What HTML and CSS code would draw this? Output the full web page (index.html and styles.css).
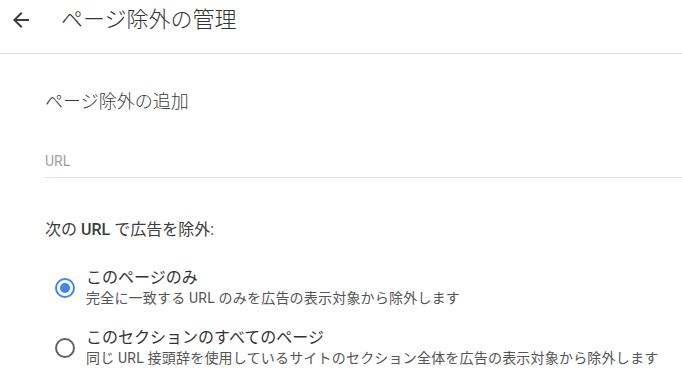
FILE: index.html
```html
<!DOCTYPE html>
<html lang="ja">
<head>
    <meta charset="UTF-8">
    <meta name="viewport" content="width=device-width, initial-scale=1.0">
    <title>ページ除外の管理</title>
    <link rel="stylesheet" href="styles.css">
</head>
<body>
    <!-- Header -->
    <div class="top-bar">
        <button class="back-button" aria-label="戻る">
            <svg width="16" height="16" viewBox="0 0 16 16">
                <path d="M16 7H3.83l5.59-5.59L8 0 0 8l8 8 1.41-1.41L3.83 9H16z" fill="#3c3c3c"/>
            </svg>
        </button>
        <h1 class="page-title">ページ除外の管理</h1>
    </div>

    <div class="content">
        <h2 class="section-title">ページ除外の追加</h2>

        <!-- URL field -->
        <label class="url-field">
            <input type="text" class="url-input" placeholder="URL">
        </label>

        <p class="question">次の <b>URL</b> で広告を除外:</p>

        <div class="radio-group">
            <label class="radio-row">
                <span class="radio checked"></span>
                <span class="radio-text">
                    <span class="radio-label">このページのみ</span>
                    <span class="radio-desc">完全に一致する URL のみを広告の表示対象から除外します</span>
                </span>
            </label>
            <label class="radio-row">
                <span class="radio"></span>
                <span class="radio-text">
                    <span class="radio-label">このセクションのすべてのページ</span>
                    <span class="radio-desc">同じ URL 接頭辞を使用しているサイトのセクション全体を広告の表示対象から除外します</span>
                </span>
            </label>
        </div>
    </div>
</body>
</html>
```

FILE: styles.css
```css
* {
    margin: 0;
    padding: 0;
    box-sizing: border-box;
}

body {
    background-color: #ffffff;
    color: #333333;
    font-family: Roboto, "Noto Sans CJK JP", sans-serif;
}

/* Header */
.top-bar {
    height: 54px;
    padding: 0 0 14px 13px;
    border-bottom: 1px solid #e0e0e0;
    display: flex;
    align-items: center;
}

.back-button {
    width: 16px;
    height: 16px;
    border: none;
    background: none;
    display: flex;
    cursor: pointer;
}

.page-title {
    margin-left: 32px;
    font-size: 22px;
    font-weight: 300;
    line-height: 26px;
    color: #333333;
}

/* Content */
.content {
    padding-left: 45px;
}

.section-title {
    margin-top: 36px;
    font-size: 18px;
    font-weight: 300;
    line-height: 24px;
    color: #3a3a3a;
}

.url-field {
    display: block;
    margin-top: 38px;
    padding-bottom: 7px;
    border-bottom: 1px solid #e0e0e0;
}

.url-input {
    display: block;
    width: 100%;
    height: 18px;
    border: none;
    outline: none;
    font-family: Roboto, "Noto Sans CJK JP", sans-serif;
    font-size: 14px;
    line-height: 18px;
    color: #333;
}

.url-input::placeholder {
    color: #9e9e9e;
}

.question {
    margin-top: 41px;
    font-size: 16px;
    line-height: 22px;
    color: #3c3c3c;
}

.question b {
    font-weight: 500;
}

/* Radios */
.radio-group {
    margin-top: 27px;
    display: flex;
    flex-direction: column;
    gap: 20px;
}

.radio-row {
    display: flex;
    align-items: center;
    cursor: pointer;
}

.radio {
    width: 20px;
    height: 20px;
    margin-left: 10px;
    margin-right: 11px;
    border: 2px solid #616161;
    border-radius: 50%;
    display: flex;
    align-items: center;
    justify-content: center;
    flex-shrink: 0;
}

.radio.checked {
    border-color: #4285f4;
}

.radio.checked::after {
    content: "";
    width: 10px;
    height: 10px;
    border-radius: 50%;
    background-color: #4285f4;
}

.radio-text {
    display: flex;
    flex-direction: column;
}

.radio-label {
    font-size: 16px;
    line-height: 20px;
    color: #333333;
}

.radio-desc {
    font-size: 14px;
    line-height: 20px;
    color: #555555;
    letter-spacing: 0.2px;
}
```
